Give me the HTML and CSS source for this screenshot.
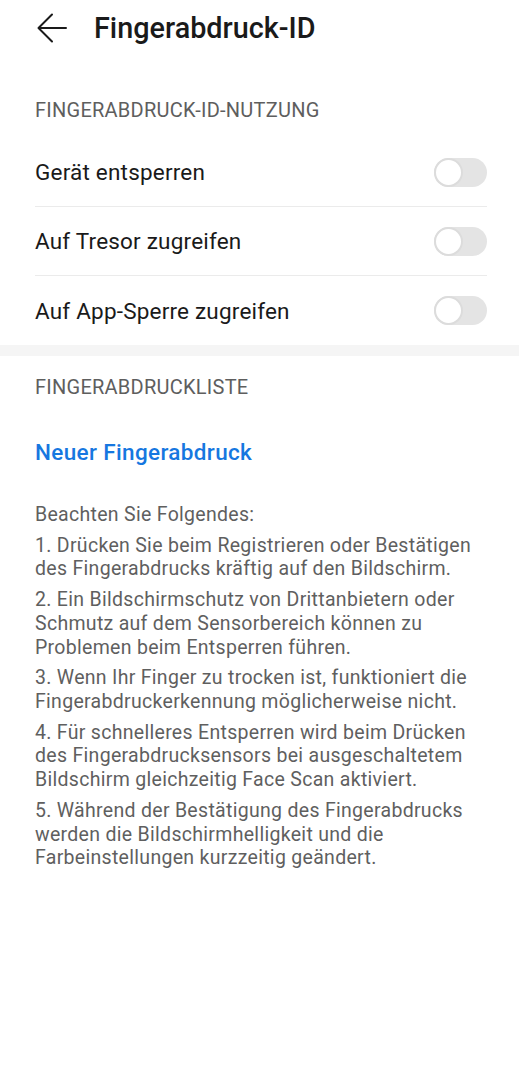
FILE: index.html
```html
<!DOCTYPE html>
<html lang="de">
<head>
<meta charset="utf-8">
<title>Fingerabdruck-ID</title>
<link rel="stylesheet" href="styles.css">
</head>
<body>
<header class="appbar">
  <svg class="back" width="30" height="30" viewBox="0 0 30 30" aria-hidden="true">
    <path d="M29 15H2M15 1.5L1.5 15L15 28.5" fill="none" stroke="#1a1a1a" stroke-width="2" stroke-linecap="round" stroke-linejoin="round"/>
  </svg>
  <h1 class="title">Fingerabdruck-ID</h1>
</header>

<section class="group">
  <h2 class="section-title first">FINGERABDRUCK-ID-NUTZUNG</h2>
  <div class="list">
    <div class="row"><span class="label">Gerät entsperren</span><span class="switch"><span class="knob"></span></span></div>
    <div class="row"><span class="label">Auf Tresor zugreifen</span><span class="switch"><span class="knob"></span></span></div>
    <div class="row"><span class="label">Auf App-Sperre zugreifen</span><span class="switch"><span class="knob"></span></span></div>
  </div>
</section>

<div class="band"></div>

<section class="group">
  <h2 class="section-title second">FINGERABDRUCKLISTE</h2>
  <a class="new-link">Neuer Fingerabdruck</a>
  <div class="notes">
    <p>Beachten Sie Folgendes:</p>
    <p>1. Drücken Sie beim Registrieren oder Bestätigen des Fingerabdrucks kräftig auf den Bildschirm.</p>
    <p>2. Ein Bildschirmschutz von Drittanbietern oder Schmutz auf dem Sensorbereich können zu Problemen beim Entsperren führen.</p>
    <p>3. Wenn Ihr Finger zu trocken ist, funktioniert die Fingerabdruckerkennung möglicherweise nicht.</p>
    <p>4. Für schnelleres Entsperren wird beim Drücken des Fingerabdrucksensors bei ausgeschaltetem Bildschirm gleichzeitig Face Scan aktiviert.</p>
    <p>5. Während der Bestätigung des Fingerabdrucks werden die Bildschirmhelligkeit und die Farbeinstellungen kurzzeitig geändert.</p>
  </div>
</section>
</body>
</html>
```

FILE: styles.css
```css
* { box-sizing: border-box; }

html, body {
  margin: 0;
  padding: 0;
  background: #ffffff;
}

body {
  font-family: Roboto, "Noto Sans", "Liberation Sans", sans-serif;
  color: #1a1a1a;
  width: 519px;
}

.appbar {
  height: 56px;
  display: flex;
  align-items: center;
  padding-left: 37px;
  gap: 27px;
}

.back {
  display: block;
  flex: none;
}

.title {
  margin: 0;
  font-size: 28.8px;
  font-weight: 500;
  line-height: 34px;
  color: #1a1a1a;
}

.section-title {
  margin: 0;
  padding-left: 35px;
  font-size: 20px;
  letter-spacing: 0.25px;
  font-weight: 400;
  line-height: 24px;
  color: #5e5e5e;
}

.section-title.first {
  margin-top: 42px;
  margin-bottom: 16px;
}

.section-title.second {
  margin-top: 19px;
}

.list {
  padding: 0 32px 0 35px;
}

.row {
  height: 69px;
  display: flex;
  align-items: center;
  justify-content: space-between;
  border-bottom: 1px solid #ebebeb;
}

.row:last-child {
  border-bottom: none;
}

.label {
  font-size: 22.5px;
  letter-spacing: 0.2px;
  line-height: 28px;
  color: #1a1a1a;
}

.switch {
  width: 53px;
  height: 29px;
  border-radius: 15px;
  background: #e4e4e4;
  position: relative;
  flex: none;
}

.knob {
  position: absolute;
  left: 0;
  top: 0;
  width: 29px;
  height: 29px;
  border-radius: 50%;
  background: #ffffff;
  border: 2px solid #dcdcdc;
}

.band {
  height: 11px;
  background: #f5f5f5;
}

.new-link {
  display: block;
  margin-top: 39px;
  padding-left: 35px;
  font-size: 22.5px;
  letter-spacing: 0.35px;
  font-weight: 500;
  line-height: 28px;
  color: #1677e0;
}

.notes {
  margin-top: 37px;
  padding: 0 30px 0 35px;
}

.notes p {
  margin: 0 0 6.8px 0;
  font-size: 19.5px;
  letter-spacing: 0.3px;
  line-height: 23.8px;
  color: #5f5f5f;
}
```
